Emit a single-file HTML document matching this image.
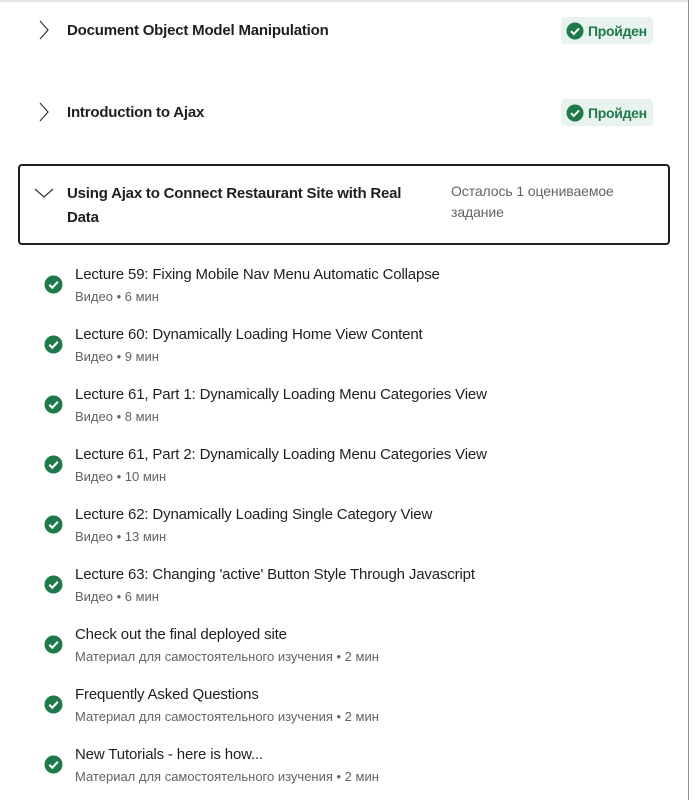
<!DOCTYPE html>
<html><head><meta charset="utf-8"><style>
*{margin:0;padding:0;box-sizing:border-box}
body{width:695px;height:800px;background:#fff;font-family:"Liberation Sans",sans-serif;color:#1f1f1f;position:relative;overflow:hidden}
.topline{position:absolute;left:0;top:0;width:689px;height:2px;background:#e5e5e5}
.rline{position:absolute;left:688px;top:0;width:1px;height:800px;background:#8f8f8f}
.a{position:absolute}
.h{font-weight:bold;font-size:15px;letter-spacing:-0.2px;color:#1f1f1f}
.badge{position:absolute;left:561px;width:92px;height:27px;background:#e8f2ee;border-radius:4px;color:#1f7a4a;font-weight:bold;font-size:14px;letter-spacing:-0.3px}
.badge svg{position:absolute;left:5px;top:5px}
.badge span{position:absolute;left:27px;top:6px}
.box{position:absolute;left:18px;top:164px;width:652px;height:81px;border:2px solid #1f1f1f;border-radius:4px}
.t{position:absolute;left:75px;font-size:15px;letter-spacing:-0.15px;color:#1f1f1f}
.m{position:absolute;left:75px;font-size:13px;letter-spacing:0px;color:#636363}
.ic{position:absolute;left:44px}
</style></head><body>
<div class="topline"></div><div class="rline"></div>
<svg class="a" style="left:38px;top:20px" width="12" height="20"><path d="M2 1 L10 10 L2 19" stroke="#333" stroke-width="1.2" fill="none"/></svg>
<div class="a h" style="left:67px;top:22px">Document Object Model Manipulation</div>
<div class="badge" style="top:17px"><svg width="18" height="18"><circle cx="9" cy="9" r="8.5" fill="#1f7a4a"/><path d="M5 9.2 L7.8 12 L13 6.5" stroke="#fff" stroke-width="2" fill="none"/></svg><span>Пройден</span></div>
<svg class="a" style="left:38px;top:102px" width="12" height="20"><path d="M2 1 L10 10 L2 19" stroke="#333" stroke-width="1.2" fill="none"/></svg>
<div class="a h" style="left:67px;top:104px">Introduction to Ajax</div>
<div class="badge" style="top:99px"><svg width="18" height="18"><circle cx="9" cy="9" r="8.5" fill="#1f7a4a"/><path d="M5 9.2 L7.8 12 L13 6.5" stroke="#fff" stroke-width="2" fill="none"/></svg><span>Пройден</span></div>
<div class="box"></div>
<svg class="a" style="left:34px;top:187px" width="20" height="12"><path d="M1 2 L10 10 L19 2" stroke="#333" stroke-width="1.2" fill="none"/></svg>
<div class="a h" style="left:67px;top:182px;line-height:24px;width:345px">Using Ajax to Connect Restaurant Site with Real Data</div>
<div class="a" style="left:451px;top:181px;font-size:14px;line-height:21px;color:#636363;letter-spacing:-0.1px;width:190px">Осталось 1 оцениваемое задание</div>
<div id="list"></div>
<script>
var items=[["Lecture 59: Fixing Mobile Nav Menu Automatic Collapse","Видео • 6 мин"],["Lecture 60: Dynamically Loading Home View Content","Видео • 9 мин"],["Lecture 61, Part 1: Dynamically Loading Menu Categories View","Видео • 8 мин"],["Lecture 61, Part 2: Dynamically Loading Menu Categories View","Видео • 10 мин"],["Lecture 62: Dynamically Loading Single Category View","Видео • 13 мин"],["Lecture 63: Changing 'active' Button Style Through Javascript","Видео • 6 мин"],["Check out the final deployed site","Материал для самостоятельного изучения • 2 мин"],["Frequently Asked Questions","Материал для самостоятельного изучения • 2 мин"],["New Tutorials - here is how...","Материал для самостоятельного изучения • 2 мин"]];
var h="";items.forEach(function(it,i){var y=266+i*60;
h+='<svg class="ic" style="top:'+(y+9)+'px" width="19" height="19"><circle cx="9.5" cy="9.5" r="9" fill="#1f7a4a"/><path d="M5.3 9.8 L8.3 12.7 L13.8 6.8" stroke="#fff" stroke-width="2.1" fill="none"/></svg>';
h+='<div class="t" style="top:'+y+'px">'+it[0]+'</div><div class="m" style="top:'+(y+23)+'px">'+it[1]+'</div>';});
document.getElementById("list").innerHTML=h;
</script>
</body></html>
